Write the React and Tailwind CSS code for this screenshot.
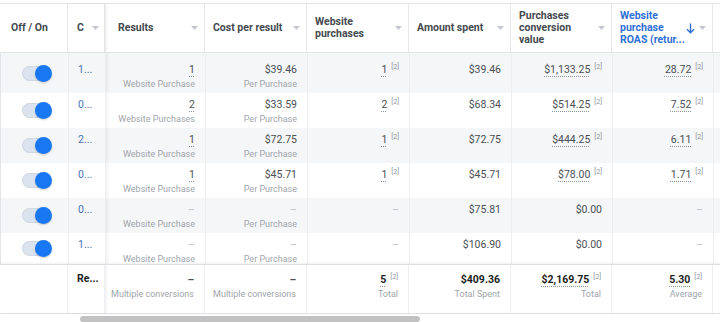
import React from "react";

const widths = [
  "w-[68px]",
  "w-[37px]",
  "w-[100px]",
  "w-[102px]",
  "w-[102px]",
  "w-[102px]",
  "w-[101px]",
  "w-[101px]",
  "w-[7px]",
];

const rows = [
  { c: "1...", res: "1", resSub: "Website Purchase", cost: "$39.46", wp: "1", spent: "$39.46", pcv: "$1,133.25", roas: "28.72" },
  { c: "0...", res: "2", resSub: "Website Purchases", cost: "$33.59", wp: "2", spent: "$68.34", pcv: "$514.25", roas: "7.52" },
  { c: "2...", res: "1", resSub: "Website Purchase", cost: "$72.75", wp: "1", spent: "$72.75", pcv: "$444.25", roas: "6.11" },
  { c: "0...", res: "1", resSub: "Website Purchase", cost: "$45.71", wp: "1", spent: "$45.71", pcv: "$78.00", roas: "1.71" },
  { c: "0...", res: null, resSub: "Website Purchase", cost: null, wp: null, spent: "$75.81", pcv: "$0.00", roas: null, zero: true },
  { c: "1...", res: null, resSub: "Website Purchase", cost: null, wp: null, spent: "$106.90", pcv: "$0.00", roas: null, zero: true },
];

const rowHeights = ["h-[40px]", "h-[35px]", "h-[35px]", "h-[35px]", "h-[35px]", "h-[31px]"];
const rowPads = ["pt-[9px]", "pt-[4px]", "pt-[4px]", "pt-[4px]", "pt-[4px]", "pt-[4px]"];

function Caret() {
  return (
    <svg width="7" height="4" viewBox="0 0 7 4" className="shrink-0">
      <path d="M0 0h7L3.5 4z" fill="#c4c8ce" />
    </svg>
  );
}

function SortArrow() {
  return (
    <svg width="9" height="11" viewBox="0 0 9 11" className="shrink-0">
      <path d="M4.5 0.5v9M1 6.2l3.5 3.6L8 6.2" fill="none" stroke="#2f6fd6" strokeWidth="1.4" />
    </svg>
  );
}

function HeaderCell({ width, children, caret = true, active, pl = "pl-2", last }) {
  return (
    <div
      className={`${width} h-full flex items-center justify-between ${pl} pr-[6px] ${last ? "" : "border-r border-[#e6e8eb]"}`}
    >
      <div className={`leading-[12px] font-bold whitespace-nowrap ${active ? "text-[#2f6fd6]" : "text-[#444950]"}`}>{children}</div>
      {caret && (
        <div className="flex items-center gap-[4px]">
          {active && <SortArrow />}
          <Caret />
        </div>
      )}
    </div>
  );
}

function Value({ v, sub, ul, sup, bold, dash }) {
  return (
    <div className="flex flex-col items-end pr-[10px]">
      <div className="flex items-start h-[15px] leading-[15px] text-[10.5px]">
        {dash ? (
          <span className={bold ? "text-[#4b4f56] font-bold" : "text-[#bcc0c4]"}>–</span>
        ) : (
          <span
            className={`${bold ? "font-bold text-[#1c1e21]" : "text-[#4b4f56]"} ${
              ul ? "underline decoration-dotted decoration-[#8d949e] underline-offset-[3px]" : ""
            }`}
          >
            {v}
          </span>
        )}
        {sup && <span className="ml-[4px] text-[7px] leading-[11px] text-[#8d949e]">[2]</span>}
      </div>
      {sub && <div className="text-[9px] leading-[14px] text-[#a0a5ab] whitespace-nowrap">{sub}</div>}
    </div>
  );
}

function Toggle() {
  return (
    <div className="relative w-[29px] h-[15px] rounded-full bg-[#dbe3ef] shadow-[inset_0_0_0_1px_rgba(0,0,0,0.05)]">
      <div className="absolute right-[-1px] top-[-1px] w-[17px] h-[17px] rounded-full bg-[#1877f2] shadow-[0_1px_2px_rgba(0,0,0,0.2)]" />
    </div>
  );
}

function Cell({ width, children, border = true, extra = "" }) {
  return (
    <div className={`${width} shrink-0 h-full ${border ? "border-r border-[#eceef0]" : ""} ${extra}`}>{children}</div>
  );
}

export default function App() {
  return (
    <div className="w-[720px] h-[322px] bg-white overflow-hidden pt-[3px] font-[Roboto,sans-serif] text-[10.5px]">
      {/* header */}
      <div className="flex h-[50px] border-t border-b border-[#e2e5e0]">
        <HeaderCell width={widths[0]} caret={false} pl="pl-[11px]">Off / On</HeaderCell>
        <div className={`${widths[1]} h-full flex items-center justify-between pl-[9px] pr-[5px] border-r border-[#e0e2e5] shadow-[2px_0_2px_rgba(0,0,0,0.06)] relative z-10`}>
          <span className="font-bold text-[#444950]">C</span>
          <Caret />
        </div>
        <HeaderCell width={widths[2]} pl="pl-[13px]">Results</HeaderCell>
        <HeaderCell width={widths[3]}>Cost per result</HeaderCell>
        <HeaderCell width={widths[4]}>Website<br />purchases</HeaderCell>
        <HeaderCell width={widths[5]}>Amount spent</HeaderCell>
        <HeaderCell width={widths[6]}>Purchases<br />conversion<br />value</HeaderCell>
        <HeaderCell width={widths[7]} active>Website<br />purchase<br />ROAS (retur...</HeaderCell>
        <div className="w-[7px]" />
      </div>

      {/* body */}
      <div className="border-l border-[#e2e4e7]">
        {rows.map((r, i) => (
          <div key={i} className={`flex overflow-hidden ${rowHeights[i]} ${i % 2 === 0 ? "bg-[#f5f6f7]" : "bg-white"}`}>
            <Cell width={widths[0]} extra="flex items-center pl-[21px]">
              <Toggle />
            </Cell>
            <Cell width={widths[1]} extra={`${rowPads[i]} pl-[9px] border-[#e0e2e5] shadow-[2px_0_2px_rgba(0,0,0,0.05)] relative z-10`}>
              <span className="text-[#4a72b5] leading-[15px]">{r.c}</span>
            </Cell>
            <Cell width={widths[2]} extra={rowPads[i]}>
              <Value v={r.res} dash={!r.res} ul sub={r.resSub} />
            </Cell>
            <Cell width={widths[3]} extra={rowPads[i]}>
              <Value v={r.cost} dash={!r.cost} sub="Per Purchase" />
            </Cell>
            <Cell width={widths[4]} extra={rowPads[i]}>
              <Value v={r.wp} dash={!r.wp} ul sup={!!r.wp} />
            </Cell>
            <Cell width={widths[5]} extra={rowPads[i]}>
              <Value v={r.spent} />
            </Cell>
            <Cell width={widths[6]} extra={rowPads[i]}>
              <Value v={r.pcv} ul={!r.zero} sup={!r.zero} />
            </Cell>
            <Cell width={widths[7]} extra={rowPads[i]}>
              <Value v={r.roas} dash={!r.roas} ul sup={!!r.roas} />
            </Cell>
            <Cell width={widths[8]} border={false} />
          </div>
        ))}
      </div>

      {/* footer */}
      <div className="flex h-[50px] border-t border-b border-[#dcdfe3] shadow-[0_-1px_2px_rgba(0,0,0,0.06)] relative">
        <Cell width={widths[0]} />
        <Cell width={widths[1]} extra="pt-[6px] pl-[9px] border-[#e0e2e5] shadow-[2px_0_2px_rgba(0,0,0,0.05)] relative z-10">
          <span className="font-bold text-[#1c1e21] leading-[15px]">Re...</span>
        </Cell>
        <Cell width={widths[2]} extra="pt-[7px]">
          <Value dash bold sub="Multiple conversions" />
        </Cell>
        <Cell width={widths[3]} extra="pt-[7px]">
          <Value dash bold sub="Multiple conversions" />
        </Cell>
        <Cell width={widths[4]} extra="pt-[7px]">
          <Value v="5" bold ul sup sub="Total" />
        </Cell>
        <Cell width={widths[5]} extra="pt-[7px]">
          <Value v="$409.36" bold sub="Total Spent" />
        </Cell>
        <Cell width={widths[6]} extra="pt-[7px]">
          <Value v="$2,169.75" bold ul sup sub="Total" />
        </Cell>
        <Cell width={widths[7]} extra="pt-[7px]">
          <Value v="5.30" bold ul sup sub="Average" />
        </Cell>
        <Cell width={widths[8]} border={false} />
      </div>

      {/* scrollbar */}
      <div className="mt-[2px] h-[6px]">
        <div className="ml-[80px] w-[340px] h-[6px] rounded-full bg-[#c2c2c2]" />
      </div>
    </div>
  );
}
